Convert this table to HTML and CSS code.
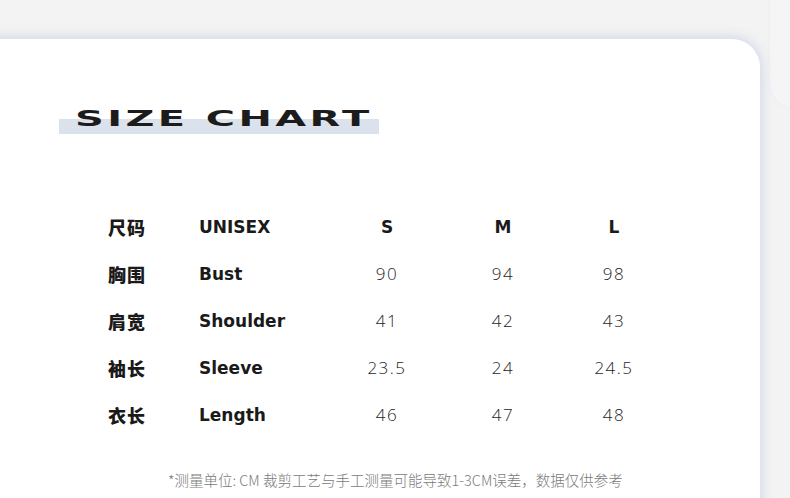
FILE: index.html
```html
<!DOCTYPE html>
<html lang="zh-CN">
<head>
<meta charset="utf-8">
<title>Size Chart</title>
<link rel="stylesheet" href="styles.css">
</head>
<body>
<div class="back-card"></div>
<section class="card">
  <div class="title-wrap">
    <h1 class="title"><span class="title-text">SIZE CHART</span></h1>
  </div>
  <div class="chart">
    <div class="cn">尺码</div><div class="en">UNISEX</div><div class="size">S</div><div class="size">M</div><div class="size">L</div>
    <div class="cn">胸围</div><div class="en">Bust</div><div class="num">90</div><div class="num">94</div><div class="num">98</div>
    <div class="cn">肩宽</div><div class="en">Shoulder</div><div class="num">41</div><div class="num">42</div><div class="num">43</div>
    <div class="cn">袖长</div><div class="en">Sleeve</div><div class="num">23.5</div><div class="num">24</div><div class="num">24.5</div>
    <div class="cn">衣长</div><div class="en">Length</div><div class="num">46</div><div class="num">47</div><div class="num">48</div>
  </div>
  <p class="note">*测量单位: CM 裁剪工艺与手工测量可能导致1-3CM误差，数据仅供参考</p>
</section>
</body>
</html>
```
FILE: styles.css
```css
html {
  overflow: hidden;
}
html, body {
  margin: 0;
  padding: 0;
}
body {
  width: 790px;
  height: 498px;
  overflow: hidden;
  background: #f3f3f3;
  position: relative;
  font-family: "DejaVu Sans", "Noto Sans CJK SC", sans-serif;
}
.back-card {
  position: absolute;
  left: 770px;
  top: -120px;
  width: 120px;
  height: 228px;
  border-radius: 26px;
  background: #f5f5f6;
  box-shadow: 0 0 4px rgba(210, 214, 226, 0.2);
}
.card {
  position: relative;
  margin: 39px 0 0 -40px;
  width: 800px;
  height: 520px;
  box-sizing: border-box;
  background: #ffffff;
  border-radius: 28px;
  box-shadow: 0 0 12px 2px rgba(196, 207, 228, 0.75);
  padding: 70px 0 0 99px;
}
.title-wrap {
  height: 25px;
}
.title {
  margin: 0;
  width: 320px;
  height: 25px;
  background: linear-gradient(to bottom, transparent 10px, #dbe2ec 10px);
  font-size: 21px;
  line-height: 20px;
  font-weight: 700;
  color: #1c1c1c;
  padding-left: 16px;
  box-sizing: border-box;
}
.title-text {
  display: inline-block;
  font-family: "DejaVu Sans", sans-serif;
  letter-spacing: 1.8px;
  transform: scaleX(1.9);
  transform-origin: 0 50%;
  white-space: nowrap;
}
.chart {
  margin: 69px 0 0 49px;
  display: grid;
  grid-template-columns: 91px 130px 116px 116px 106px;
  grid-auto-rows: 47px;
  align-items: center;
}
.cn {
  font-family: "Noto Sans CJK SC", sans-serif;
  font-weight: 900;
  font-size: 18px;
  color: #1a1a1a;
  letter-spacing: 1px;
}
.en {
  font-family: "DejaVu Sans", sans-serif;
  font-weight: 700;
  font-size: 17px;
  color: #1a1a1a;
}
.size {
  text-align: center;
  font-family: "DejaVu Sans", sans-serif;
  font-weight: 700;
  font-size: 17px;
  color: #1a1a1a;
}
.num {
  text-align: center;
  font-family: "Open Sans", sans-serif;
  font-weight: 300;
  font-size: 17px;
  letter-spacing: 1.5px;
  color: #1e1e1e;
}
.note {
  margin: 31px 0 0 109px;
  font-family: "Noto Sans CJK SC", sans-serif;
  font-weight: 300;
  font-size: 14.5px;
  color: #7a7a7a;
  white-space: nowrap;
}
```
